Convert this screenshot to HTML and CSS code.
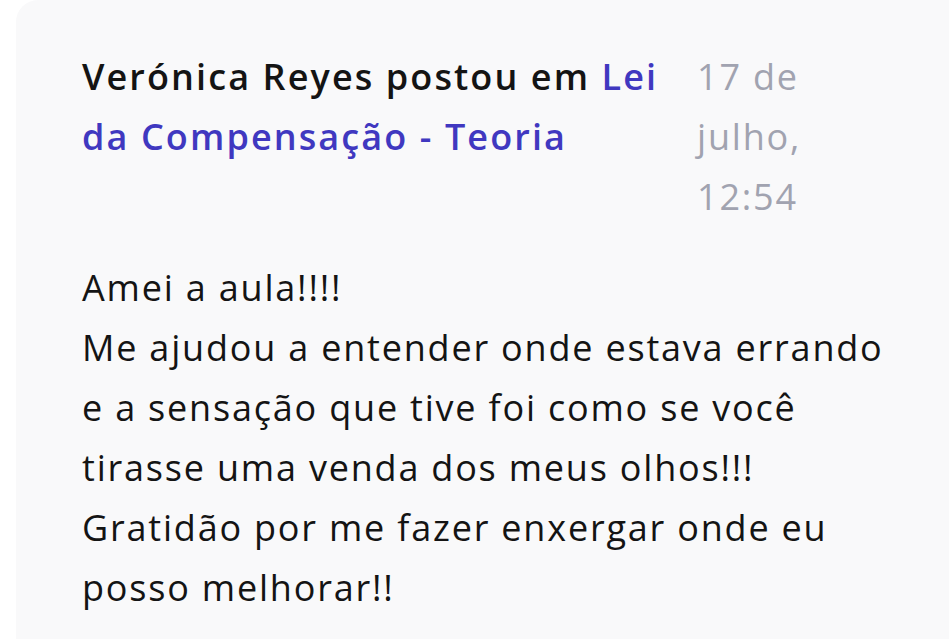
FILE: index.html
```html
<!DOCTYPE html>
<html lang="pt">
<head>
  <meta charset="UTF-8" />
  <title>Comentário</title>
  <link rel="stylesheet" href="styles.css">
</head>
<body>
  <div class="card">
    <div class="post-head">
      <div class="post-title">
        <span class="author">Verónica Reyes postou em</span>
        <a class="lesson" href="#">Lei da Compensação - Teoria</a>
      </div>
      <div class="post-date">17 de julho, 12:54</div>
    </div>
    <p class="post-body">Amei a aula!!!!<br>Me ajudou a entender onde estava errando e a sensação que tive foi como se você tirasse uma venda dos meus olhos!!! <br>Gratidão por me fazer enxergar onde eu posso melhorar!!</p>
  </div>
</body>
</html>
```
FILE: styles.css
```css
body{margin:0;background:#fff;font-family:"Open Sans", "Noto Sans", sans-serif;color:#141414;}
.card{margin-left:16px;min-height:639px;background:#f9f9fa;border-top-left-radius:22px;padding:47px 30px 0 66px;box-sizing:border-box;}
.post-head{display:flex;gap:13px;font-size:36px;line-height:60px;letter-spacing:1.8px;}
.post-title{width:602px;font-weight:600;letter-spacing:2.1px;}
.lesson{color:#4038c0;text-decoration:none;}
.post-date{width:120px;color:#a1a3b0;}
.post-body{margin:31px 0 0;font-size:36px;line-height:60px;letter-spacing:1.8px;max-width:820px;}
```
